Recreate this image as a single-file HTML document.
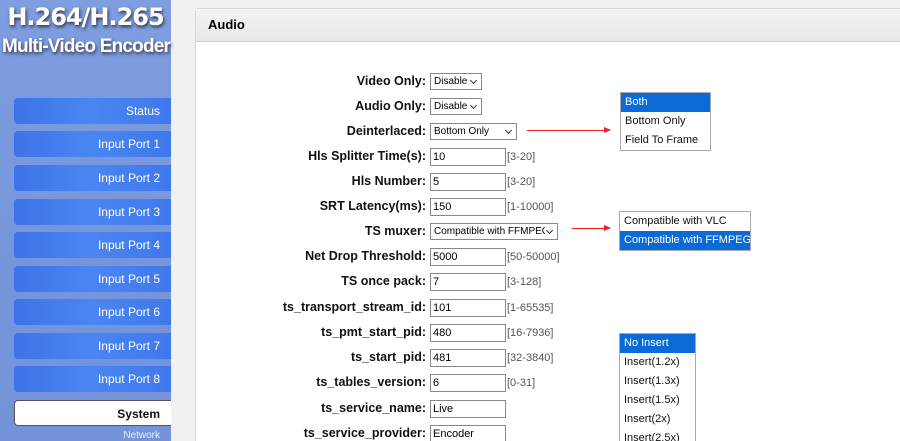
<!DOCTYPE html>
<html style="overflow:hidden"><head><style>
html,body{margin:0;width:900px;height:441px;overflow:hidden}
body{background:#f1f1f1;font-family:"Liberation Sans",Arial,sans-serif;position:relative}
#side{position:absolute;left:0;top:0;width:171px;height:441px;background:linear-gradient(#7e9ee0,#7795dc 60%,#7493da)}
.t1{position:absolute;left:0;width:171px;text-align:center;color:#fff;font-weight:bold;text-shadow:1px 2px 3px #334;}
.btn{position:absolute;left:14px;width:157px;height:26px;border-radius:4px 0 0 4px;background:linear-gradient(90deg,#3d73e8,#4a86f2 50%,#3f78ec);color:#fff;font-size:12px;text-align:right;line-height:26px;box-sizing:border-box;padding-right:11px}
.sys{background:#fff;color:#111;font-weight:bold;border:1px solid #555;border-right:none}
#panel{position:absolute;left:195px;top:8px;width:720px;height:440px;background:#fff;border:1px solid #d6d6d6;border-radius:4px 0 0 0;box-sizing:border-box}
#ph{height:32px;background:linear-gradient(#f4f4f4,#e8e8e8);border-bottom:1px solid #d0d0d0;font-weight:bold;font-size:13px;line-height:32px;padding-left:12px}
.row{position:absolute;left:0;width:900px;height:18px;font-size:12.5px}
.lab{position:absolute;right:474px;top:1px;font-weight:bold;color:#111;white-space:nowrap}
.in{position:absolute;left:430px;top:0;width:76px;height:18px;border:1px solid #888;box-sizing:border-box;font-size:11px;line-height:16px;padding-left:2px;background:#fff}
.sel{position:absolute;left:430px;top:0;height:17px;border:1px solid #888;box-sizing:border-box;font-size:10px;line-height:15px;padding-left:3px;background:#fff;white-space:nowrap;overflow:hidden}
.sel span{display:block;overflow:hidden;margin-right:12px}
.sel:after{content:"";position:absolute;right:5px;top:4px;width:4px;height:4px;border-right:1px solid #333;border-bottom:1px solid #333;transform:rotate(45deg)}
.rng{position:absolute;left:507px;top:3px;font-size:11px;color:#555}
.dd{position:absolute;background:#fff;border:1px solid #aaa;font-size:11px;overflow:hidden;box-sizing:border-box}
.dd div{height:19px;line-height:19px;padding-left:4px;white-space:nowrap;color:#111}
.dd .on{background:#0a6ad6;color:#fff}
.ar{position:absolute;height:1px;background:#e22}
.ar:after{content:"";position:absolute;right:-1px;top:-3px;border-left:7px solid #e22;border-top:3.5px solid transparent;border-bottom:3.5px solid transparent}
</style></head><body>
<div id="side">
<div class="t1" style="top:3px;font-size:24px;font-family:'DejaVu Sans',sans-serif;letter-spacing:-1px">H.264/H.265</div>
<div class="t1" style="top:36px;font-size:19px;white-space:nowrap;left:2px;text-align:left;letter-spacing:-0.8px">Multi-Video Encoder</div>
<div class="btn" style="top:98px">Status</div>
<div class="btn" style="top:131px">Input Port 1</div>
<div class="btn" style="top:165px">Input Port 2</div>
<div class="btn" style="top:199px">Input Port 3</div>
<div class="btn" style="top:232px">Input Port 4</div>
<div class="btn" style="top:266px">Input Port 5</div>
<div class="btn" style="top:299px">Input Port 6</div>
<div class="btn" style="top:333px">Input Port 7</div>
<div class="btn" style="top:366px">Input Port 8</div>
<div class="btn sys" style="top:400px">System</div>
<div style="position:absolute;right:11px;top:430px;font-size:10px;color:#e8eefc">Network</div>
</div>
<div id="panel"><div id="ph">Audio</div></div>

<div class="row" style="top:73px"><span class="lab">Video Only:</span><span class="sel" style="width:52px"><span>Disable</span></span></div>
<div class="row" style="top:98px"><span class="lab">Audio Only:</span><span class="sel" style="width:52px"><span>Disable</span></span></div>
<div class="row" style="top:123px"><span class="lab">Deinterlaced:</span><span class="sel" style="width:87px"><span>Bottom Only</span></span></div>
<div class="row" style="top:148px"><span class="lab">Hls Splitter Time(s):</span><span class="in">10</span><span class="rng">[3-20]</span></div>
<div class="row" style="top:173px"><span class="lab">Hls Number:</span><span class="in">5</span><span class="rng">[3-20]</span></div>
<div class="row" style="top:198px"><span class="lab">SRT Latency(ms):</span><span class="in">150</span><span class="rng">[1-10000]</span></div>
<div class="row" style="top:223px"><span class="lab">TS muxer:</span><span class="sel" style="width:128px"><span>Compatible with FFMPEG</span></span></div>
<div class="row" style="top:248px"><span class="lab">Net Drop Threshold:</span><span class="in">5000</span><span class="rng">[50-50000]</span></div>
<div class="row" style="top:273px"><span class="lab">TS once pack:</span><span class="in">7</span><span class="rng">[3-128]</span></div>
<div class="row" style="top:299px"><span class="lab">ts_transport_stream_id:</span><span class="in">101</span><span class="rng">[1-65535]</span></div>
<div class="row" style="top:324px"><span class="lab">ts_pmt_start_pid:</span><span class="in">480</span><span class="rng">[16-7936]</span></div>
<div class="row" style="top:349px"><span class="lab">ts_start_pid:</span><span class="in">481</span><span class="rng">[32-3840]</span></div>
<div class="row" style="top:374px"><span class="lab">ts_tables_version:</span><span class="in">6</span><span class="rng">[0-31]</span></div>
<div class="row" style="top:400px"><span class="lab">ts_service_name:</span><span class="in">Live</span></div>
<div class="row" style="top:425px"><span class="lab">ts_service_provider:</span><span class="in">Encoder</span></div>

<div class="ar" style="left:527px;top:130px;width:83px"></div>
<div class="ar" style="left:572px;top:228px;width:38px"></div>
<div class="dd" style="left:620px;top:92px;width:91px"><div class="on">Both</div><div>Bottom Only</div><div>Field To Frame</div></div>
<div class="dd" style="left:619px;top:211px;width:132px"><div>Compatible with VLC</div><div class="on">Compatible with FFMPEG</div></div>
<div class="dd" style="left:619px;top:333px;width:77px;height:120px"><div class="on">No Insert</div><div>Insert(1.2x)</div><div>Insert(1.3x)</div><div>Insert(1.5x)</div><div>Insert(2x)</div><div>Insert(2.5x)</div></div>
</body></html>
